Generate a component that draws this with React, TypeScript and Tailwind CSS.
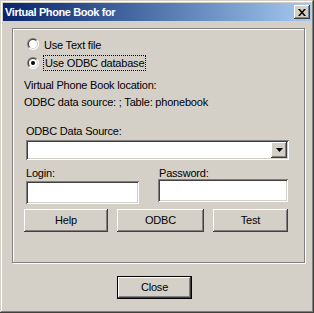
import React from "react"

const raised =
  "bg-[#d4d0c8] shadow-[inset_-1px_-1px_#404040,inset_1px_1px_#ffffff,inset_-2px_-2px_#808080,inset_2px_2px_#d4d0c8]"
const sunken =
  "bg-white shadow-[inset_1px_1px_#808080,inset_-1px_-1px_#ffffff,inset_2px_2px_#404040,inset_-2px_-2px_#d4d0c8]"

function Radio({ checked }: { checked?: boolean }) {
  return (
    <svg width="12" height="12" viewBox="0 0 12 12" className="shrink-0">
      <path d="M10.243 1.757A6 6 0 0 0 1.757 10.243Z" fill="#808080" />
      <path d="M10.243 1.757A6 6 0 0 1 1.757 10.243Z" fill="#ffffff" />
      <path d="M9.536 2.464A5 5 0 0 0 2.464 9.536Z" fill="#404040" />
      <path d="M9.536 2.464A5 5 0 0 1 2.464 9.536Z" fill="#d4d0c8" />
      <circle cx="6" cy="6" r="4" fill="#ffffff" />
      {checked && <circle cx="6" cy="6" r="2" fill="#000000" />}
    </svg>
  )
}

function Button({ label, w }: { label: string; w: string }) {
  return (
    <div className={`${raised} ${w} h-[23px] flex items-center justify-center`}>
      {label}
    </div>
  )
}

export default function App() {
  return (
    <div
      className="w-[314px] h-[313px] bg-[#d4d0c8] p-[3px] text-[11px] leading-[13px] tracking-[-0.2px] text-black shadow-[inset_-1px_-1px_#404040,inset_1px_1px_#d4d0c8,inset_-2px_-2px_#808080,inset_2px_2px_#ffffff]"
      style={{ fontFamily: '"Liberation Sans", Arial, sans-serif' }}
    >
      {/* Title bar */}
      <div className="h-[18px] bg-gradient-to-r from-[#0a246a] to-[#a6caf0] flex items-center pl-[2px] pr-[1px]">
        <span className="text-white font-bold text-[11px] tracking-[-0.4px] flex-1">Virtual Phone Book for</span>
        <div className={`${raised} w-[16px] h-[14px] flex items-center justify-center`}>
          <svg width="8" height="7" viewBox="0 0 8 7">
            <path d="M0 0h2l2 2.5L6 0h2L5 3.5 8 7H6L4 4.5 2 7H0l3-3.5Z" fill="#000" />
          </svg>
        </div>
      </div>

      {/* Group box */}
      <div className="ml-[9px] mt-[7px] w-[293px] h-[235px] border border-[#808080] shadow-[inset_1px_1px_#ffffff,1px_1px_#ffffff] flex flex-col">
        <div className="flex items-start ml-[14px] mt-[9px]">
          <Radio />
          <span className="ml-[5px] mt-[1px]">Use Text file</span>
        </div>
        <div className="flex items-start ml-[14px] mt-[3px]">
          <div className="mt-[2px]">
            <Radio checked />
          </div>
          <span className="ml-[4px] border border-dotted border-black px-[1px] leading-[14px]">
            Use ODBC database
          </span>
        </div>
        <div className="ml-[11px] mt-[8px]">Virtual Phone Book location:</div>
        <div className="ml-[11px] mt-[4px]">ODBC data source: ; Table: phonebook</div>

        <div className="ml-[13px] mt-[16px]">ODBC Data Source:</div>
        <div className={`${sunken} ml-[13px] mt-[2px] w-[263px] h-[20px] flex justify-end items-center pr-[2px]`}>
          <div className={`${raised} w-[16px] h-[16px] flex items-center justify-center`}>
            <svg width="7" height="4" viewBox="0 0 7 4">
              <path d="M0 0h7L3.5 4Z" fill="#000" />
            </svg>
          </div>
        </div>

        <div className="flex ml-[13px] mt-[7px]">
          <div className="flex flex-col w-[113px]">
            <span>Login:</span>
            <div className={`${sunken} mt-[1px] h-[23px]`} />
          </div>
          <div className="flex flex-col w-[130px] ml-[19px]">
            <span className="ml-[1px]">Password:</span>
            <div className={`${sunken} mt-[-1px] h-[23px]`} />
          </div>
        </div>

        <div className="flex ml-[11px] mt-[5px] gap-[9px]">
          <Button label="Help" w="w-[84px]" />
          <Button label="ODBC" w="w-[87px]" />
          <Button label="Test" w="w-[75px]" />
        </div>
      </div>

      {/* Close */}
      <div className="ml-[114px] mt-[13px] w-[75px] h-[23px] border border-black">
        <div className={`${raised} w-full h-full flex items-center justify-center`}>Close</div>
      </div>
    </div>
  )
}
